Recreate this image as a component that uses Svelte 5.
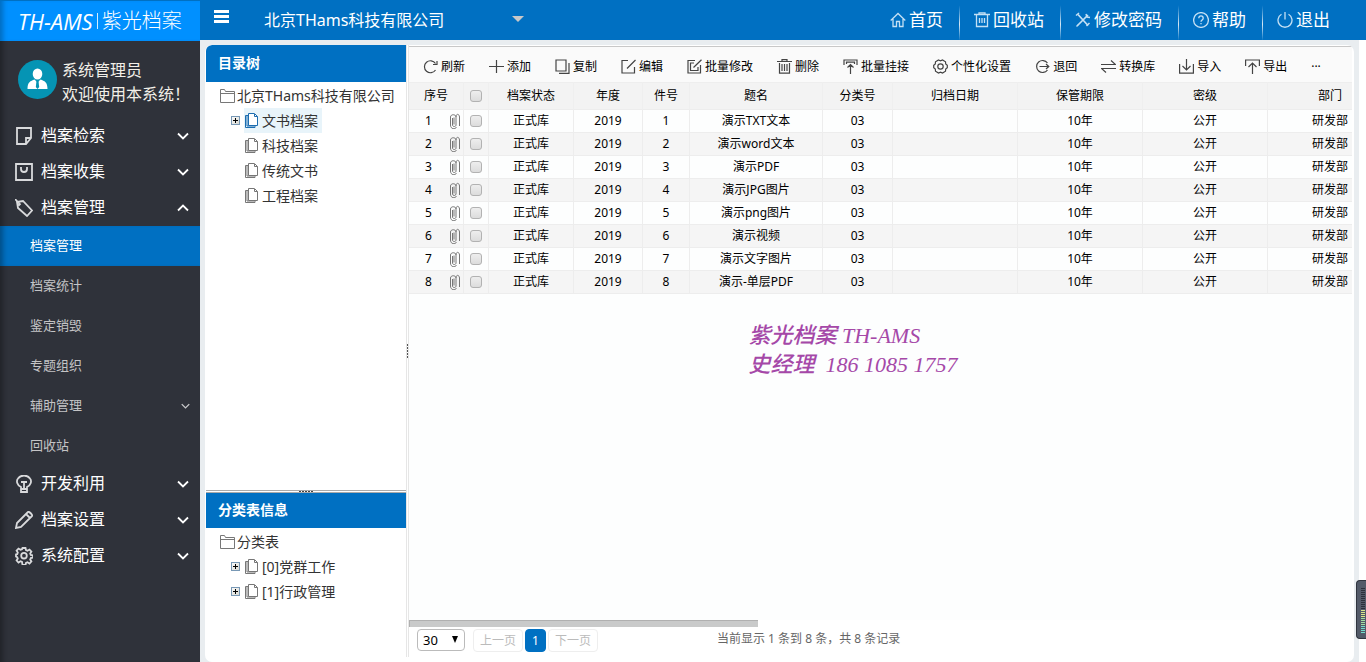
<script>
  const menuTop = [
    { label: '档案检索', icon: 'note', open: false },
    { label: '档案收集', icon: 'bag', open: false },
    { label: '档案管理', icon: 'tag', open: true }
  ];
  const submenu = [
    { label: '档案管理', active: true },
    { label: '档案统计' },
    { label: '鉴定销毁' },
    { label: '专题组织' },
    { label: '辅助管理', more: true },
    { label: '回收站' }
  ];
  const menuBottom = [
    { label: '开发利用', icon: 'bulb', open: false },
    { label: '档案设置', icon: 'pencil', open: false },
    { label: '系统配置', icon: 'gear', open: false }
  ];
  const topLinks = [
    { label: '首页', icon: 'home' },
    { label: '回收站', icon: 'bin' },
    { label: '修改密码', icon: 'tools' },
    { label: '帮助', icon: 'help' },
    { label: '退出', icon: 'power' }
  ];
  const tools = [
    ['refresh', '刷新'],
    ['plus', '添加'],
    ['copy', '复制'],
    ['edit', '编辑'],
    ['editAll', '批量修改'],
    ['trash', '删除'],
    ['attach', '批量挂接'],
    ['hexgear', '个性化设置'],
    ['back', '退回'],
    ['swap', '转换库'],
    ['import', '导入'],
    ['export', '导出']
  ];
  const catalog = [
    { label: '文书档案', expandable: true, selected: true },
    { label: '科技档案' },
    { label: '传统文书' },
    { label: '工程档案' }
  ];
  const classes = [
    { label: '[0]党群工作', expandable: true },
    { label: '[1]行政管理', expandable: true }
  ];
  const titles = ['演示TXT文本', '演示word文本', '演示PDF', '演示JPG图片', '演示png图片', '演示视频', '演示文字图片', '演示-单层PDF'];
  const widths = [55, 25, 85, 69, 47, 133, 70, 125, 125, 125, 125];
</script>

{#snippet menuIcon(name)}
  <svg class="menu-icon" viewBox="0 0 18 18" aria-hidden="true">
    {#if name === 'note'}
      <path d="M2 1h14v10l-5 6H2zM16 11h-5v6" />
    {:else if name === 'bag'}
      <path d="M1 1h16v16H1zM6 4v2a3 3 0 0 0 6 0V4" />
    {:else if name === 'tag'}
      <path d="M2 3l6-1 9 9.500-5 5.500-9-8zM0 0l4 4.500M3.500 6.500l2-2" />
    {:else if name === 'bulb'}
      <path d="M6 12C2 10 1 6 3 3.500c3-4 9-4 12 0 2 2.500 1 6.500-3 8.500v2H6zM6.500 17h5M6 7h6M9 7v6M6 14v3h6v-3" />
    {:else if name === 'pencil'}
      <path d="M1 17l1-5L13 1c1-1 5 3 4 4L6 16zM11 3l4 4" />
    {:else}
      <path d="M7.500 1h3l.5 2.200 1.500.6 2-1.200 1.900 2-1.200 1.900.6 1.500 2.200.5v2l-2.200.6-.6 1.500 1.200 1.900-1.900 2-2-1.300-1.500.7-.5 2.100h-3L7 14.900l-1.500-.7-2 1.300-1.900-2 1.200-1.900-.6-1.500L1 9.500v-2l1.200-.3.600-1.700-1.200-1.900 1.900-2 2 1.200L7 2.200z" /><circle cx="9" cy="8.700" r="2.800" />
    {/if}
  </svg>
{/snippet}

{#snippet chevron(up, small)}
  <svg class="chevron" class:small viewBox="0 0 12 8" aria-hidden="true">
    <path d={up ? 'M1 6.500l5-5 5 5' : 'M1 1.500l5 5 5-5'} />
  </svg>
{/snippet}

{#snippet topIcon(name)}
  <svg class="top-icon" viewBox="0 0 16 16" aria-hidden="true">
    {#if name === 'home'}
      <path d="M.7 8.500L8 1.500l7.300 7M3 7v7.500h3.500V9.500h3v5H13V7" />
    {:else if name === 'bin'}
      <path d="M0 2.500h16M5 2V.8h6V2M2.500 2.500v12h11v-12M5.500 6v5M8 6v5M10.500 6v5" />
    {:else if name === 'tools'}
      <path d="M3 2.500l10 11M13 3L3 13" stroke-width="1.700" /><path d="M1 3.500l3-2.500M11 2l1 3 3 .5M1.500 14.500l2-2M11.500 14l3-3" stroke-width="1.500" />
    {:else if name === 'help'}
      <circle cx="8" cy="8" r="7.400" /><path d="M5.800 6.200c0-3 4.400-3 4.400 0C10.200 8 8 8 8 9.800M8 11v1.300" />
    {:else}
      <path d="M8 0v7.500M4.500 2.200a7 7 0 1 0 7 0" />
    {/if}
  </svg>
{/snippet}

{#snippet toolIcon(name)}
  <svg class="tool-icon" viewBox="0 0 15 15" aria-hidden="true">
    {#if name === 'refresh'}
      <path d="M12.500 11A6 6 0 1 1 12.500 4.500M14 2v3.500h-4" />
    {:else if name === 'plus'}
      <path d="M0 7.500h15M7.500 1v13" />
    {:else if name === 'copy'}
      <path d="M1 1h10v11H1zM14 4v10.300H4" />
    {:else if name === 'edit'}
      <path d="M7 1.500H1v12.500h12.500V8M6 9.500l8.500-8.500" />
    {:else if name === 'editAll'}
      <path d="M8 1.500H1v12.500h12.500V6M7 4H3.500v7.500h7.500V8M6.500 8.500L14.500.8" />
    {:else if name === 'trash'}
      <path d="M0 2.500h15M5 2V.6h5V2M2.500 4v10.200h10V4M5 5v7M7.500 5v7M10 5v7" />
    {:else if name === 'attach'}
      <path d="M1 6V1h13v5M3.500 5V3.200h8V5M7.500 15V5.500M4.500 8.500l3-3 3 3" />
    {:else if name === 'hexgear'}
      <path d="M5.500 1l2 .8 2-.8 3 1.800.2 2.200 1.600 1.300v2.400L12.700 10l-.2 2.200-3 1.800-2-.8-2 .8-3-1.800L2.300 10 .7 8.700V6.300L2.300 5l.2-2.200z" /><circle cx="7.500" cy="7.500" r="2.700" />
    {:else if name === 'back'}
      <path d="M12.500 4A6 6 0 1 0 12.500 11M4.500 7.500h9.500M11 5l2.800 2.500L11 10" />
    {:else if name === 'swap'}
      <path d="M0 5.500h14.500L10 1.500M15 9.500H.5L5 13.500" />
    {:else if name === 'import'}
      <path d="M.6 5v9.200h13.800V5M7.500 0v11M3.500 7l4 4 4-4" />
    {:else}
      <path d="M.6 7V1h13.800v6M7.500 15V4M3.500 8l4-4 4 4" />
    {/if}
  </svg>
{/snippet}

{#snippet folder(label)}
  <a class="root" href="#tree">
    <svg class="folder" viewBox="0 0 15 14" aria-hidden="true"><path d="M.5 13.500V.5h4l1 2h9v11zM.5 4.500h14" /></svg>
    {label}
  </a>
{/snippet}

{#snippet leaf(node)}
  <li>
    {#if node.expandable}
      <button class="expander" aria-label="展开"><svg viewBox="0 0 9 9" aria-hidden="true"><path d="M2 4.500h5M4.500 2v5" /></svg></button>
    {:else}
      <span class="blank"></span>
    {/if}
    <a class="leaf" class:selected={node.selected} href="#tree">
      <svg class="pages" viewBox="0 0 13 15" aria-hidden="true">
        <path d="M3.500.5h6l3 3v9h-9z" fill="#fff" /><path d="M9.500 1v2.500h3" /><path d="M3 2.500H.5v12h9.500v-2M2 3v10h7.500" />
      </svg>
      {node.label}
    </a>
  </li>
{/snippet}

<div class="app">
  <aside>
    <div class="logo"><i>TH-AMS</i><span class="bar"></span><span class="brand">紫光档案</span></div>
    <div class="user">
      <svg class="avatar" viewBox="0 0 39 39" aria-hidden="true">
        <circle cx="19.500" cy="19.500" r="19.500" fill="#0594b4" />
        <ellipse cx="19.500" cy="14" rx="4.800" ry="5.500" fill="#fff" />
        <path d="M9.500 29c0-7 3-8 7-9.500l3 3 3-3c4 1.500 7 2.500 7 9.500z" fill="#fff" />
        <path d="M18.500 21h2l.7 6-1.700 2-1.700-2z" fill="#0594b4" />
      </svg>
      <div>系统管理员<br />欢迎使用本系统！</div>
    </div>
    <nav>
      {#each menuTop as m}
        <button class="menu">{@render menuIcon(m.icon)}<span>{m.label}</span>{@render chevron(m.open, false)}</button>
      {/each}
      {#each submenu as s}
        <a class="sub" class:active={s.active} href="#menu"><span>{s.label}</span>{#if s.more}{@render chevron(false, true)}{/if}</a>
      {/each}
      {#each menuBottom as m}
        <button class="menu">{@render menuIcon(m.icon)}<span>{m.label}</span>{@render chevron(m.open, false)}</button>
      {/each}
    </nav>
  </aside>

  <div class="main">
    <header>
      <button class="burger" aria-label="菜单"><span></span><span></span><span></span></button>
      <div class="company">
        <select aria-label="公司"><option>北京THams科技有限公司</option></select>
        <svg viewBox="0 0 12 6" aria-hidden="true"><path d="M0 0h12L6 6z" /></svg>
      </div>
      <nav class="links">
        {#each topLinks as l}
          <a href="#top">{@render topIcon(l.icon)}{l.label}</a>
        {/each}
      </nav>
    </header>

    <div class="content">
      <div class="panel">
        <section class="side">
          <h2 class="first">目录树</h2>
          <div class="tree upper">
            {@render folder('北京THams科技有限公司')}
            <ul>{#each catalog as n}{@render leaf(n)}{/each}</ul>
          </div>
          <div class="hsplit"><span></span></div>
          <h2>分类表信息</h2>
          <div class="tree lower">
            {@render folder('分类表')}
            <ul>{#each classes as n}{@render leaf(n)}{/each}</ul>
          </div>
        </section>
        <div class="vsplit"><span></span></div>
        <section class="grid">
          <div class="toolbar">
            {#each tools as [icon, label]}
              <button>{@render toolIcon(icon)}{label}</button>
            {/each}
            <button aria-label="更多">···</button>
          </div>
          <div class="rows">
            <table>
              <colgroup>{#each widths as w}<col style="width:{w}px" />{/each}</colgroup>
              <thead>
                <tr>
                  <th>序号</th><th><input type="checkbox" aria-label="全选" /></th><th>档案状态</th><th>年度</th><th>件号</th>
                  <th>题名</th><th>分类号</th><th>归档日期</th><th>保管期限</th><th>密级</th><th>部门</th>
                </tr>
              </thead>
              <tbody>
                {#each titles as t, i}
                  <tr>
                    <td><div class="num"><span>{i + 1}</span>
                      <svg viewBox="0 0 11 16" aria-hidden="true"><path d="M3.500 5v7c0 2 3.500 2 3.500 0V4c0-3-5.500-3-5.500 0v8c0 4.500 5 4.500 6 2M5 4.500v7M7 4c0-4 3.500-3 3.500 0v9" /></svg></div></td>
                    <td><input type="checkbox" aria-label="选择 {i + 1}" /></td>
                    <td>正式库</td><td>2019</td><td>{i + 1}</td><td>{t}</td><td>03</td><td></td><td>10年</td><td>公开</td><td>研发部</td>
                  </tr>
                {/each}
              </tbody>
            </table>
            <p class="contact">紫光档案 TH-AMS<br />史经理&nbsp; 186 1085 1757</p>
          </div>
          <div class="scroll"><div></div></div>
          <footer>
            <div class="size">
              <select aria-label="每页条数"><option>30</option></select>
              <svg viewBox="0 0 6 7" aria-hidden="true"><path d="M0 0h6L3 7z" /></svg>
            </div>
            <div class="pages-nav">
              <button disabled>上一页</button><button class="current">1</button><button disabled>下一页</button>
            </div>
            <span class="info">当前显示 1 条到 8 条，共 8 条记录</span>
          </footer>
        </section>
      </div>
    </div>
  </div>

  <div class="meter" aria-hidden="true">
    {#each Array(23) as _, i}<span class:yellow={i > 10 && i < 15} class:green={i >= 15 && i < 19} class:teal={i >= 19}></span>{/each}
  </div>
</div>

<style>
  :global(body) { margin: 0; background: #fff; }
  .app {
    position: relative;
    display: grid;
    grid-template-columns: 200px minmax(0, 1fr);
    min-height: 100vh;
    font-family: "Noto Sans", "Noto Sans CJK SC", sans-serif;
    font-size: 12px;
    color: #000;
  }
  .app * { box-sizing: border-box; }
  button, select { font: inherit; border: 0; padding: 0; margin: 0; background: none; color: inherit; }
  a { color: inherit; text-decoration: none; }
  svg { fill: none; stroke: currentColor; flex: none; display: block; }

  aside { background: #2f323a; box-shadow: inset 6px 0 5px -3px rgba(0, 0, 0, .3); color: #fff; }
  .logo {
    display: flex; align-items: center; height: 41px; padding: 0 0 0 18px;
    border-top: 1px solid #0070c2; background: #0090ff; box-shadow: inset 6px 0 5px -3px rgba(0, 0, 0, .25);
    white-space: nowrap;
  }
  .logo i { font-family: "Open Sans", "Noto Sans", sans-serif; font-size: 22px; line-height: 28px; }
  .bar { width: 1px; height: 16px; margin: 0 4px; background: #d5ecff; }
  .brand { font-size: 20px; line-height: 28px; font-weight: 300; }
  .user { display: flex; align-items: center; gap: 5px; height: 77px; padding: 4px 0 0 18px; font-size: 16px; line-height: 24px; white-space: nowrap; color: #f2efe8; }
  .avatar { width: 39px; height: 39px; stroke: none; margin-bottom: 4px; }
  .menu { display: flex; align-items: center; width: 100%; height: 36px; padding: 0 11px 0 15px; gap: 8px; font-size: 16px; line-height: 24px; }
  .menu span { flex: 1; padding-bottom: 2px; text-align: left; }
  .menu-icon { width: 18px; height: 18px; stroke: #d9dadc; stroke-width: 1.8; }
  .chevron { width: 12px; height: 8px; stroke-width: 1.8; }
  .chevron.small { width: 9px; height: 6px; color: #c9c9cb; }
  .sub { display: flex; align-items: center; justify-content: space-between; height: 40px; padding: 0 10px 0 30px; font-size: 13px; line-height: 20px; color: #c4c4c6; }
  .sub span { padding-bottom: 2px; }
  .sub.active { background: #0070c2; color: #fff; box-shadow: inset 6px 0 5px -3px rgba(0, 0, 0, .3); }

  .main { display: flex; flex-direction: column; min-width: 0; }
  header { display: flex; height: 40px; background: #0070c2; color: #fff; white-space: nowrap; }
  .burger { display: flex; flex-direction: column; gap: 2px; width: 15px; margin: 10px 34px 0 14px; }
  .burger span { height: 3px; background: #fff; }
  .company { display: flex; align-items: center; gap: 0; width: 262px; margin-left: 1px; }
  .company select { width: 248px; height: 32px; appearance: none; font-size: 16px; line-height: 24px; }
  .company svg { width: 12px; height: 6px; fill: #c8c8c8; stroke: none; margin-top: -2px; }
  .links { display: flex; margin-left: auto; padding-right: 20px; font-size: 17px; line-height: 40px; }
  .links a { display: flex; align-items: center; gap: 3px; padding: 0 16px 0 14px; border-right: 1px solid; border-image: linear-gradient(#0070c2 15%, #d7e8f5 60%, #0070c2) 1; }
  .links a:last-child { border: 0; }
  .top-icon { width: 16px; height: 16px; color: #c4e0f4; stroke-width: 1.3; }

  .content { flex: 1; display: flex; margin-right: 7px; padding: 5px 5px 0; background: #e9edf0; }
  .panel { flex: 1; min-width: 0; display: flex; padding: 0 2px 0 1px; border-radius: 7px; background: #fff; overflow: hidden; }
  .side { flex: none; width: 200px; display: flex; flex-direction: column; color: #333; }
  h2 { margin: 0; padding: 0 0 2px 12px; background: #0070c2; color: #fff; font-size: 14px; line-height: 33px; font-weight: 700; }
  h2.first { line-height: 35px; border-top-left-radius: 6px; }
  .tree { padding: 1px 0 0 14px; font-size: 14px; line-height: 25px; white-space: nowrap; }
  .upper { flex: 409 1 0; }
  .lower { flex: 133 1 0; }
  .root { display: flex; align-items: center; gap: 2px; }
  .folder { width: 15px; height: 14px; color: #777; }
  ul { list-style: none; margin: 0; padding: 0 0 0 11px; }
  li { display: flex; align-items: center; gap: 4px; height: 25px; }
  .expander, .blank { width: 9px; height: 9px; }
  .expander { background: linear-gradient(135deg, #fff, #d4d4cc); outline: 1px solid #7898b5; outline-offset: -1px; color: #000; }
  .leaf { display: flex; align-items: center; gap: 4px; padding: 0 4px 0 1px; }
  .leaf.selected { background: #e8f4fa; }
  .pages { width: 13px; height: 15px; color: #777; }
  .selected .pages { color: #1c6db0; }
  .hsplit { display: flex; justify-content: center; height: 3px; border-top: 1px solid #aaa; border-bottom: 1px solid #aaa; }
  .hsplit span { width: 14px; height: 1px; background: repeating-linear-gradient(90deg, #444 0 2px, #fff 2px 3px); }
  .vsplit { flex: none; display: flex; align-items: center; width: 3px; margin-bottom: 5px; border-left: 1px solid #e6e6e6; border-right: 1px solid #e6e6e6; }
  .vsplit span { width: 1px; height: 14px; background: repeating-linear-gradient(#555 0 2px, #fff 2px 3px); }

  .grid { flex: 1; min-width: 0; display: flex; flex-direction: column; padding-top: 1px; }
  .toolbar { display: flex; align-items: center; gap: 24px; height: 36px; padding: 4px 0 0 14px; border-top: 1px solid #c8c8c8; background: #fafafa; white-space: nowrap; overflow: hidden; }
  .toolbar button { display: flex; align-items: center; gap: 3px; line-height: 18px; }
  .tool-icon { width: 15px; height: 15px; color: #444; stroke-width: 1.2; }
  .rows { flex: 1; overflow: hidden; background: #fdfefe; }
  table { width: 984px; table-layout: fixed; border-collapse: separate; border-spacing: 0; text-align: center; white-space: nowrap; }
  th, td { padding: 0; border-right: 1px solid #ededed; border-bottom: 1px solid #ededed; line-height: 22px; height: 23px; font-weight: 400; }
  th { height: 27px; line-height: 26px; background: #f3f3f3; border-top: 1px solid #eee; border-right-color: #efefef; }
  tbody tr:nth-child(even) { background: #f5f5f5; }
  .num { display: flex; align-items: center; }
  .num span { width: 39px; }
  .num svg { width: 11px; height: 16px; margin-left: 1px; color: #777; }
  input { display: block; appearance: none; width: 12px; height: 12px; margin: 0 auto; border: 1px solid #b2b2b2; border-radius: 3px; background: linear-gradient(#eee, #dcdcdc); }
  .contact { margin: 27px 0 0 36%; font-family: "Liberation Serif", "Noto Sans CJK SC", serif; font-size: 22px; line-height: 29px; font-style: italic; font-weight: 500; color: #a548a8; white-space: nowrap; }
  .scroll { height: 7px; }
  .scroll div { width: 37%; height: 7px; background: #c9caca; border-top: 1px solid #b0b0b0; border-left: 1px solid #b0b0b0; }
  footer { display: flex; align-items: flex-start; height: 35px; padding: 2px 0 0 8px; color: #666; white-space: nowrap; }
  .size { position: relative; width: 48px; margin-right: 8px; color: #000; }
  .size select { appearance: none; display: block; width: 48px; height: 22px; padding: 0 5px; border: 1px solid #bbb; border-radius: 4px; font-size: 13px; line-height: 20px; }
  .size svg { position: absolute; right: 7px; top: 7px; width: 6px; height: 7px; fill: #000; stroke: none; }
  .pages-nav { display: flex; gap: 2px; width: 244px; }
  .pages-nav button { height: 23px; width: 50px; border: 1px solid #eee; border-radius: 4px; color: #bbb; line-height: 20px; }
  .pages-nav button.current { width: 21px; background: #0070c2; border-color: #0070c2; color: #fff; }
  .info { line-height: 20px; }

  .meter { position: absolute; right: 0; top: 580px; width: 10px; height: 59px; padding: 7px 2px 0 4px; border: 1px solid #30343e; border-right: 0; border-radius: 4px 0 0 4px; background: #535a68; }
  .meter span { display: block; width: 4px; height: 1px; margin-bottom: 1px; background: #2c303a; }
  .meter .yellow { background: #d8e88a; }
  .meter .green { background: #a2e0a2; }
  .meter .teal { background: #74dccb; }
</style>
